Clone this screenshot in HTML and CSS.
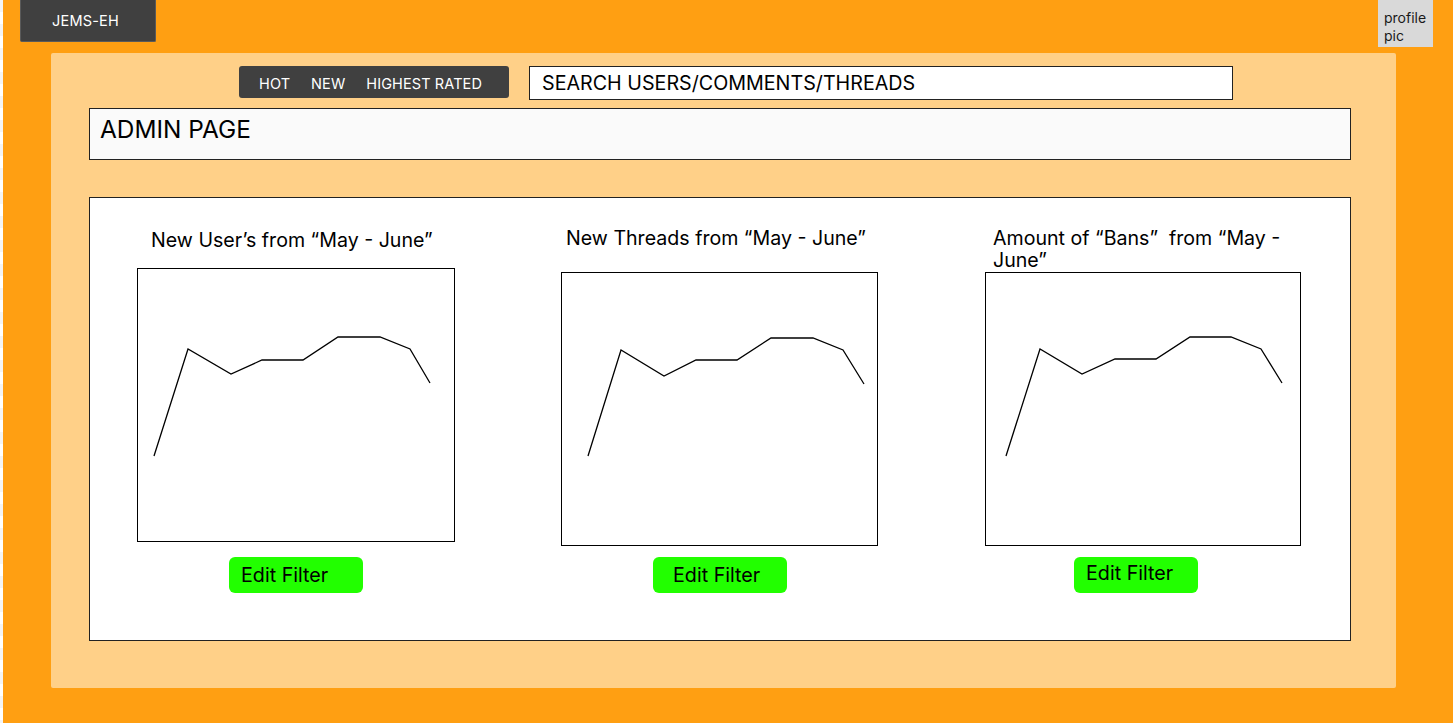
FILE: index.html
```html
<!DOCTYPE html>
<html lang="en">
<head>
<meta charset="utf-8">
<title>JEMS-EH Admin</title>
<link rel="stylesheet" href="styles.css">
</head>
<body>
<div class="edge"></div>
<div class="app">
  <header class="topbar">
    <div class="logo">JEMS-EH</div>
    <div class="profile">profile pic</div>
  </header>
  <main class="panel">
    <div class="toolbar">
      <nav class="tabs">
        <span class="tab">HOT</span>
        <span class="tab">NEW</span>
        <span class="tab">HIGHEST RATED</span>
      </nav>
      <div class="search">SEARCH USERS/COMMENTS/THREADS</div>
    </div>
    <div class="page-title">ADMIN PAGE</div>
    <section class="stats">
      <div class="stat stat-1">
        <h2 class="stat-title">New User’s from “May - June”</h2>
        <div class="chart">
          <svg width="316" height="272" viewBox="0 0 316 272"><polyline points="16,187 50,80 93,105 124,91 165,91 200,68 242,68 272,80 292,114" /></svg>
        </div>
        <button class="btn">Edit Filter</button>
      </div>
      <div class="stat stat-2">
        <h2 class="stat-title">New Threads from “May - June”</h2>
        <div class="chart">
          <svg width="315" height="272" viewBox="0 0 315 272"><polyline points="26,183 59,77 102,103 134,87 175,87 209,65 251,65 281,77 302,111" /></svg>
        </div>
        <button class="btn">Edit Filter</button>
      </div>
      <div class="stat stat-3">
        <h2 class="stat-title">Amount of “Bans”&nbsp; from “May - June”</h2>
        <div class="chart">
          <svg width="314" height="272" viewBox="0 0 314 272"><polyline points="20,183 54,76 96,101 129,86 170,86 204,64 245,64 275,76 296,110" /></svg>
        </div>
        <button class="btn btn-top">Edit Filter</button>
      </div>
    </section>
  </main>
</div>
</body>
</html>
```
FILE: styles.css
```css
* { box-sizing: border-box; }
html, body { margin: 0; padding: 0; }
body {
  width: 1453px;
  height: 723px;
  overflow: hidden;
  background: #FF9F12;
  font-family: Inter, "Noto Sans", sans-serif;
  color: #000;
  display: flex;
}
.edge {
  width: 3px;
  flex: none;
  background: repeating-linear-gradient(#f4f4f4 0 12px, #ffffff 12px 24px);
}
.app {
  flex: 1;
  display: flex;
  flex-direction: column;
}
.topbar {
  height: 53px;
  display: flex;
  justify-content: space-between;
  align-items: flex-start;
  padding: 0 20px 0 17px;
}
.logo {
  width: 136px;
  height: 42px;
  background: #404040;
  color: #fff;
  border: 1px solid #5a5a5a;
  border-top: none;
  border-radius: 0 0 2px 2px;
  font-size: 14.5px;
  display: flex;
  align-items: center;
  justify-content: center;
  padding-right: 5px;
  letter-spacing: 0.2px;
}
.profile {
  width: 55px;
  height: 47px;
  background: #D9D9D9;
  font-size: 14px;
  line-height: 18px;
  padding: 9px 0 0 6px;
  color: #1a1a1a;
}
.panel {
  margin: 0 57px 0 48px;
  height: 635px;
  background: #FFD088;
  border-radius: 2px;
  padding: 13px 0 0 38px;
}
.toolbar {
  display: flex;
  align-items: flex-start;
  gap: 20px;
  padding-left: 150px;
}
.tabs {
  width: 270px;
  height: 32px;
  background: #404040;
  border-radius: 3px;
  display: flex;
  align-items: center;
  gap: 21px;
  padding-left: 20px;
  padding-top: 2px;
}
.tab {
  color: #fff;
  font-size: 14.5px;
  letter-spacing: 0.1px;
}
.search {
  width: 704px;
  height: 34px;
  background: #fff;
  border: 1px solid #222;
  font-size: 19.7px;
  padding-left: 12px;
  display: flex;
  align-items: center;
}
.page-title {
  margin-top: 8px;
  width: 1262px;
  height: 52px;
  background: #FAFAFA;
  border: 1px solid #222;
  font-size: 24.4px;
  padding: 6px 0 0 10px;
  line-height: 28px;
}
.stats {
  margin-top: 37px;
  width: 1262px;
  height: 444px;
  background: #fff;
  border: 1px solid #222;
  display: flex;
  align-items: flex-start;
}
.stat {
  display: flex;
  flex-direction: column;
  align-items: flex-start;
}
.stat-title {
  margin: 0;
  font-weight: 400;
  font-size: 19.6px;
  line-height: 22px;
}
.chart {
  border: 1px solid #000;
  background: #fff;
}
.chart svg { display: block; }
.chart polyline {
  fill: none;
  stroke: #000;
  stroke-width: 1.3;
}
.btn {
  border: none;
  background: #22FF00;
  border-radius: 6px;
  height: 36px;
  width: 134px;
  font-family: inherit;
  font-size: 19.7px;
  color: #000;
  text-align: left;
  padding: 0 0 0 12px;
  margin-left: 92px;
  margin-top: 11px;
}
.stat-1 { margin-left: 47px; }
.stat-1 .stat-title { margin: 31px 0 17px 14px; }
.stat-1 .btn { margin-top: 15px; }
.stat-2 { margin-left: 106px; }
.stat-2 .stat-title { margin: 29px 0 23px 5px; }
.stat-2 .btn { padding-left: 20px; }
.stat-3 { margin-left: 107px; }
.stat-3 .stat-title { margin: 29px 0 1px 8px; width: 296px; }
.stat-3 .btn { margin-left: 89px; width: 124px; padding-bottom: 5px; }
```
